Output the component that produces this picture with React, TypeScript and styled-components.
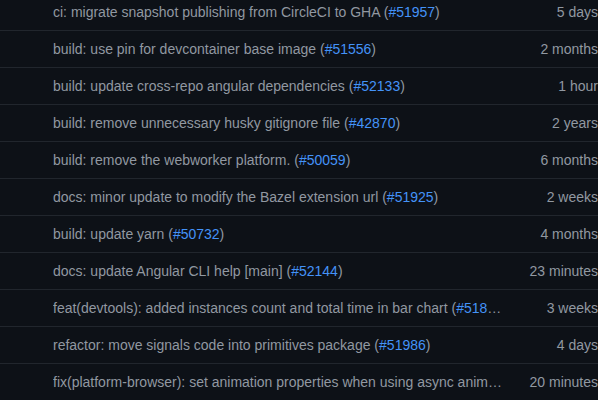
import React from "react";
import styled, { createGlobalStyle } from "styled-components";

const Global = createGlobalStyle`
  html, body { margin: 0; padding: 0; background: #0d1117; overflow: hidden; }
  body { font-family: "Liberation Sans", Arial, sans-serif; }
`;

const List = styled.div`
  margin-top: -7px;
  width: 598px;
  display: flex;
  flex-direction: column;
`;

const Row = styled.div`
  display: grid;
  grid-template-columns: 450px 1fr;
  align-items: center;
  height: 36px;
  border-top: 1px solid #21262d;
  padding-left: 53px;
  font-size: 14px;
  color: #9198a1;
`;

const Message = styled.span`
  white-space: nowrap;
  overflow: hidden;
  text-overflow: ellipsis;
`;

const PrLink = styled.a`
  color: #4493f8;
  text-decoration: none;
`;

const Age = styled.span`
  text-align: right;
  white-space: nowrap;
`;

type Item = { msg: string; pr: string; age: string };

const items: Item[] = [
  { msg: "ci: migrate snapshot publishing from CircleCI to GHA", pr: "51957", age: "5 days" },
  { msg: "build: use pin for devcontainer base image", pr: "51556", age: "2 months" },
  { msg: "build: update cross-repo angular dependencies", pr: "52133", age: "1 hour" },
  { msg: "build: remove unnecessary husky gitignore file", pr: "42870", age: "2 years" },
  { msg: "build: remove the webworker platform.", pr: "50059", age: "6 months" },
  { msg: "docs: minor update to modify the Bazel extension url", pr: "51925", age: "2 weeks" },
  { msg: "build: update yarn", pr: "50732", age: "4 months" },
  { msg: "docs: update Angular CLI help [main]", pr: "52144", age: "23 minutes" },
  { msg: "feat(devtools): added instances count and total time in bar chart", pr: "51820", age: "3 weeks" },
  { msg: "refactor: move signals code into primitives package", pr: "51986", age: "4 days" },
  { msg: "fix(platform-browser): set animation properties when using async animations", pr: "52087", age: "20 minutes" },
];

export default function App() {
  return (
    <>
      <Global />
      <List>
        {items.map((it) => (
          <Row key={it.pr}>
            <Message>
              {it.msg} (<PrLink href="#">#{it.pr}</PrLink>)
            </Message>
            <Age>{it.age}</Age>
          </Row>
        ))}
      </List>
    </>
  );
}
